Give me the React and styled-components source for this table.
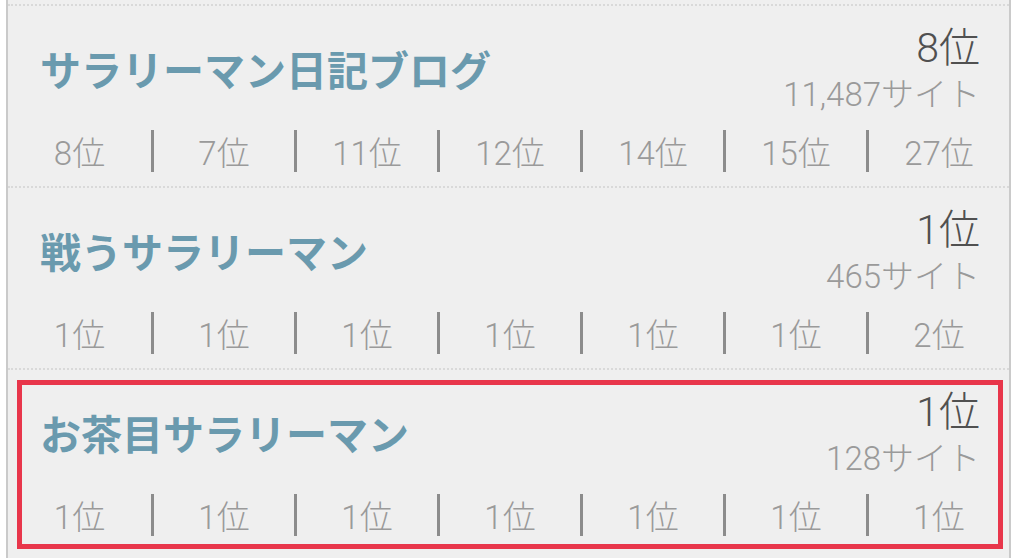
import styled, { createGlobalStyle } from 'styled-components';

const GlobalStyle = createGlobalStyle`
  html, body {
    margin: 0;
    padding: 0;
    background: #ffffff;
  }
  body {
    font-family: Roboto, "Noto Sans CJK JP", sans-serif;
  }
`;

const Panel = styled.div`
  margin-left: 6px;
  width: 1005px;
  padding-top: 4px;
  min-height: 558px;
  box-sizing: border-box;
  background: #efefef;
  border-left: 2px solid #cacaca;
  border-right: 2px solid #cacaca;
`;

const Row = styled.div`
  position: relative;
  border-top: 2px dotted #d9d9d9;
  padding: 20px 0 13px;
`;

const Header = styled.div`
  display: flex;
  align-items: center;
  justify-content: space-between;
  padding: 0 29px 0 32px;
`;

const Title = styled.div`
  font-family: "Noto Sans CJK JP", sans-serif;
  font-size: 41px;
  font-weight: 700;
  color: #6a9aae;
  line-height: 50px;
  margin-bottom: 6px;
`;

const RankBlock = styled.div`
  display: flex;
  flex-direction: column;
  align-items: flex-end;
`;

const Rank = styled.div`
  font-size: 41px;
  line-height: 44px;
  color: #505050;
  font-weight: 300;
`;

const Count = styled.div`
  margin-top: 5px;
  font-size: 33px;
  line-height: 40px;
  color: #9a9a9a;
  font-weight: 300;
`;

const History = styled.div`
  display: grid;
  grid-template-columns: repeat(7, 1fr);
  margin-top: 14px;
`;

const Cell = styled.div`
  display: flex;
  align-items: center;
  justify-content: center;
  height: 42px;
  margin: 1px 0;
  font-size: 33px;
  font-weight: 300;
  color: #9a9a9a;
  border-left: ${(p) => (p.$first ? 'none' : '3px solid #8c8c8c')};
`;

const Highlight = styled.div`
  position: absolute;
  top: 10px;
  left: 9px;
  right: 6px;
  bottom: 1px;
  border: 5px solid #e8364b;
  pointer-events: none;
`;

const blogs = [
  {
    name: 'サラリーマン日記ブログ',
    rank: '8位',
    count: '11,487サイト',
    history: ['8位', '7位', '11位', '12位', '14位', '15位', '27位'],
  },
  {
    name: '戦うサラリーマン',
    rank: '1位',
    count: '465サイト',
    history: ['1位', '1位', '1位', '1位', '1位', '1位', '2位'],
  },
  {
    name: 'お茶目サラリーマン',
    rank: '1位',
    count: '128サイト',
    history: ['1位', '1位', '1位', '1位', '1位', '1位', '1位'],
    highlight: true,
  },
];

export default function App() {
  return (
    <>
      <GlobalStyle />
      <Panel>
        {blogs.map((b) => (
          <Row key={b.name}>
            <Header>
              <Title>{b.name}</Title>
              <RankBlock>
                <Rank>{b.rank}</Rank>
                <Count>{b.count}</Count>
              </RankBlock>
            </Header>
            <History>
              {b.history.map((h, i) => (
                <Cell key={i} $first={i === 0}>
                  {h}
                </Cell>
              ))}
            </History>
            {b.highlight && <Highlight />}
          </Row>
        ))}
      </Panel>
    </>
  );
}
